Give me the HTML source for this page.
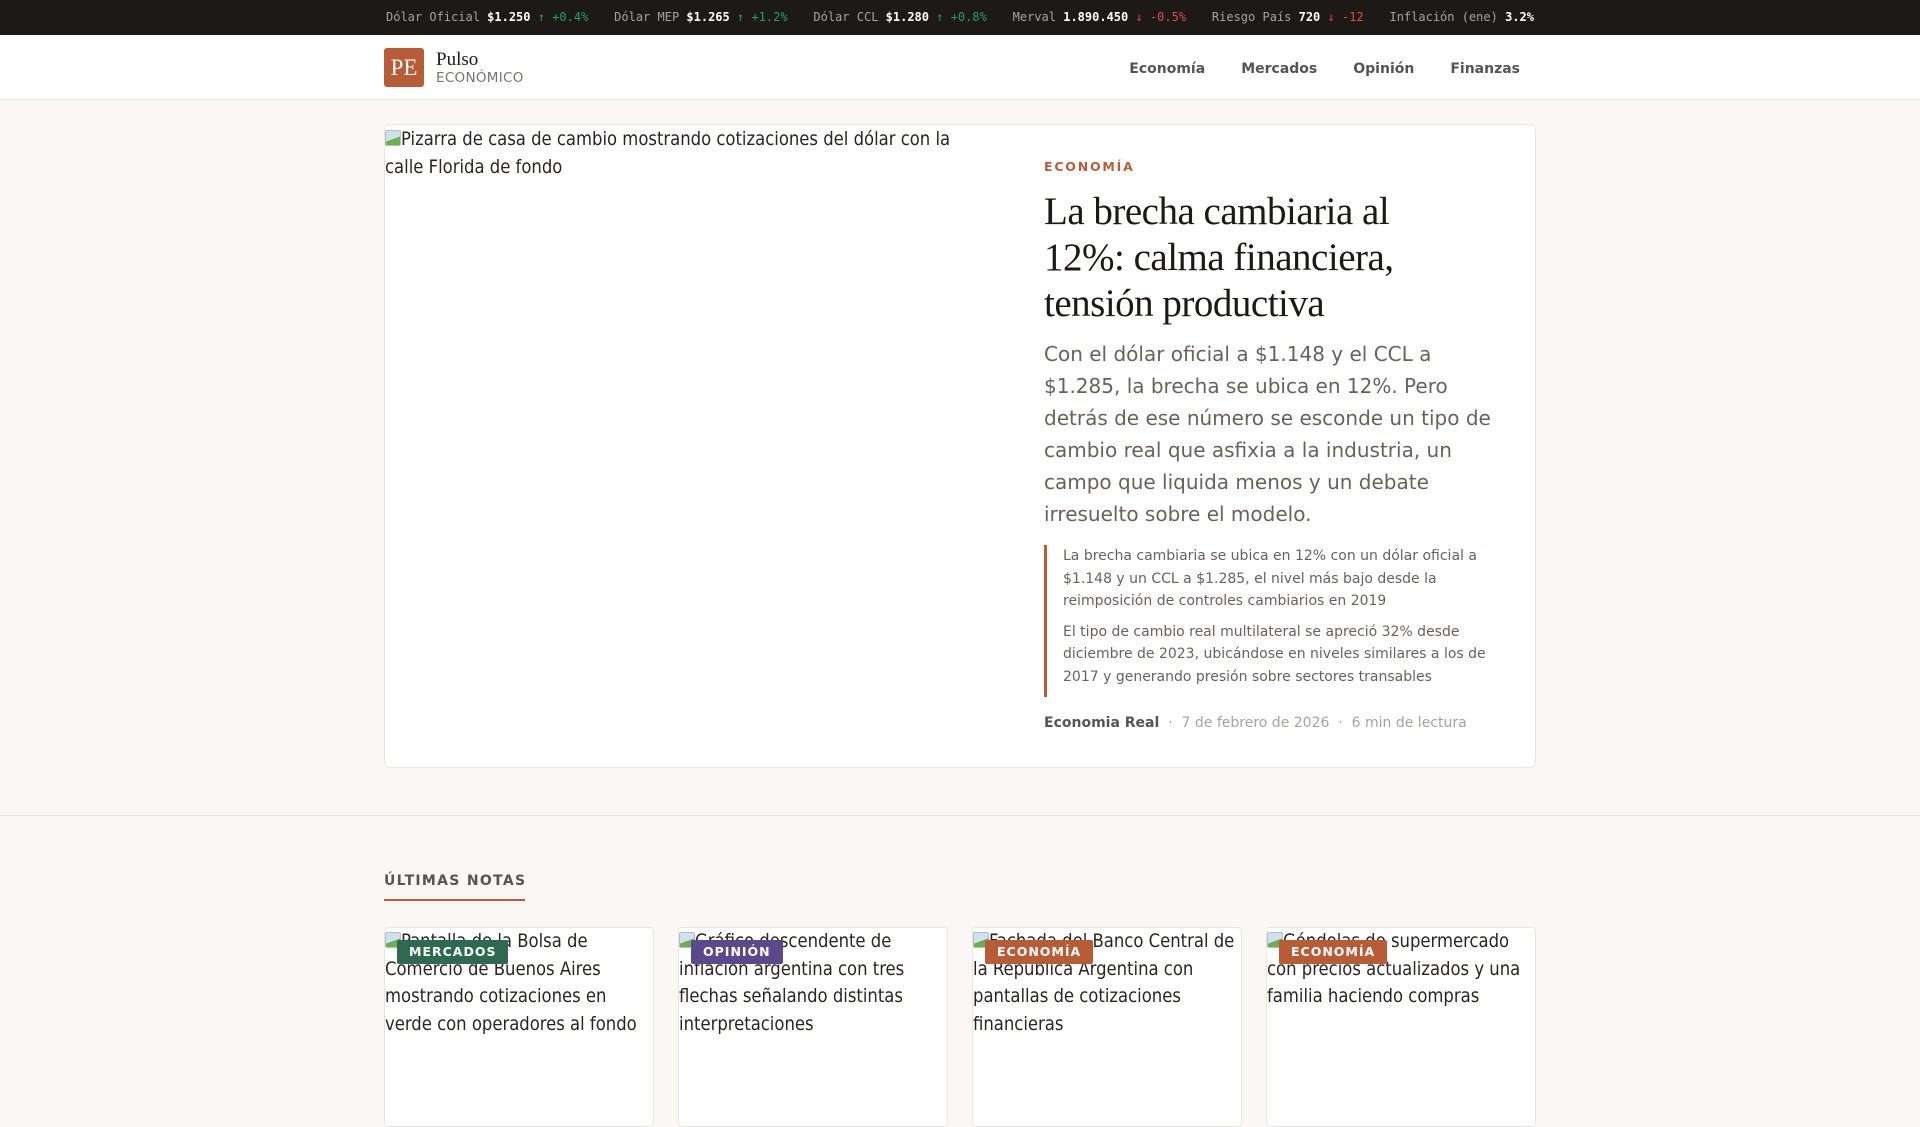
<!DOCTYPE html>
<html><head><meta charset="utf-8"><style>
*{box-sizing:border-box;margin:0;padding:0}
body{width:1920px;height:1080px;overflow:hidden;background:#faf7f4;font-family:"DejaVu Sans","Liberation Sans",sans-serif;color:#2a2420}
.tick{height:35px;background:#1c1917;color:#a8a29e;font-family:"DejaVu Sans Mono","Liberation Mono",monospace;font-size:12px;white-space:nowrap}
.tick .in{width:1152px;margin:0 auto;display:flex;justify-content:space-between;line-height:34px;padding:0 2px}
.tick b{color:#fff}.up{color:#22a05a}.dn{color:#e5484d}
header{height:65px;background:#fff;border-bottom:1px solid #e7e2dc}
header .in{width:1152px;margin:0 auto;position:relative;height:64px}
.logo{position:absolute;left:0;top:13px;width:40px;height:39px;background:#b85c38;border-radius:3px;color:#fff;font-family:"Liberation Serif",serif;font-size:23px;text-align:center;line-height:39px}
.brand{position:absolute;left:52px;top:16px}
.brand .a{font-family:"Liberation Serif",serif;font-size:19px;line-height:18px;color:#1c1917}
.brand .b{font-size:13.5px;color:#78716c;letter-spacing:.3px;margin-top:1px}
nav{position:absolute;right:0;top:0;display:flex;line-height:68px}
nav a{font-size:14px;font-weight:bold;color:#57534e;margin-left:36px;text-decoration:none}
nav a:last-child{margin-right:16px}
.hero{position:absolute;left:384px;top:124px;width:1152px;height:644px;background:#fff;border:1px solid #ebe5df;border-radius:6px;overflow:hidden}
.alt{font-family:"DejaVu Sans Condensed","DejaVu Sans",sans-serif;font-stretch:condensed;font-size:18.3px;line-height:27.5px;color:#2a2420}
.ic{display:inline-block;width:16px;height:16px;border:1px solid #bbb;border-radius:2px;background:linear-gradient(160deg,#cfe0f0 55%,#6ab04c 56%);vertical-align:-1px}
.hero .alt{position:absolute;left:0;top:1px;width:600px}
.hc{position:absolute;left:659px;top:34px;width:460px}
.cat{font-size:12.5px;font-weight:bold;letter-spacing:1.8px;color:#b85c38}
h1{font-family:"Liberation Serif",serif;font-weight:normal;font-size:39px;line-height:46px;color:#1c1917;margin-top:15px;letter-spacing:-.5px;width:405px}
.sub{font-size:20px;line-height:32px;color:#6b605a;margin-top:11px}
.q{border-left:3px solid #b85c38;margin-top:15px;padding:0 0 9px 16px;font-size:14px;line-height:22.5px;color:#6b605a}
.q p+p{margin-top:8px}
.meta{margin-top:18px;font-size:14px;color:#a8a29e}
.meta b{color:#57534e}
.sep{position:absolute;top:815px;left:0;width:1920px;border-top:1px solid #e7e2dc}
.lt{position:absolute;left:384px;top:873px;font-size:14px;font-weight:bold;letter-spacing:1.3px;color:#57534e}
.ul{position:absolute;left:384px;top:899px;width:141px;height:2px;background:#b85c38}
.card{position:absolute;top:927px;width:270px;height:200px;background:#fff;border:1px solid #ebe5df;border-radius:4px;overflow:hidden}
.bd{position:absolute;left:12px;top:12px;height:24px;padding:0 12px;color:#fff;font-size:12.5px;font-weight:bold;letter-spacing:1px;line-height:24px;border-radius:2px}
</style></head><body>
<div class="tick"><div class="in">
<span>Dólar Oficial <b>$1.250</b> <span class="up">↑ +0.4%</span></span>
<span>Dólar MEP <b>$1.265</b> <span class="up">↑ +1.2%</span></span>
<span>Dólar CCL <b>$1.280</b> <span class="up">↑ +0.8%</span></span>
<span>Merval <b>1.890.450</b> <span class="dn">↓ -0.5%</span></span>
<span>Riesgo País <b>720</b> <span class="dn">↓ -12</span></span>
<span>Inflación (ene) <b>3.2%</b></span>
</div></div>
<header><div class="in">
<div class="logo">PE</div>
<div class="brand"><div class="a">Pulso</div><div class="b">ECONÓMICO</div></div>
<nav><a>Economía</a><a>Mercados</a><a>Opinión</a><a>Finanzas</a></nav>
</div></header>
<div class="hero">
<div class="alt"><span class="ic"></span>Pizarra de casa de cambio mostrando cotizaciones del dólar con la calle Florida de fondo</div>
<div class="hc">
<div class="cat">ECONOMÍA</div>
<h1>La brecha cambiaria al 12%: calma financiera, tensión productiva</h1>
<div class="sub">Con el dólar oficial a $1.148 y el CCL a $1.285, la brecha se ubica en 12%. Pero detrás de ese número se esconde un tipo de cambio real que asfixia a la industria, un campo que liquida menos y un debate irresuelto sobre el modelo.</div>
<div class="q"><p>La brecha cambiaria se ubica en 12% con un dólar oficial a $1.148 y un CCL a $1.285, el nivel más bajo desde la reimposición de controles cambiarios en 2019</p><p>El tipo de cambio real multilateral se apreció 32% desde diciembre de 2023, ubicándose en niveles similares a los de 2017 y generando presión sobre sectores transables</p></div>
<div class="meta"><b>Economia Real</b> &nbsp;·&nbsp; 7 de febrero de 2026 &nbsp;·&nbsp; 6 min de lectura</div>
</div></div>
<div class="sep"></div>
<div class="lt">ÚLTIMAS NOTAS</div><div class="ul"></div>
<div class="card" style="left:384px"><div class="alt"><span class="ic"></span>Pantalla de la Bolsa de Comercio de Buenos Aires mostrando cotizaciones en verde con operadores al fondo</div><div class="bd" style="background:#2d6a4f">MERCADOS</div></div>
<div class="card" style="left:678px"><div class="alt"><span class="ic"></span>Gráfico descendente de inflación argentina con tres flechas señalando distintas interpretaciones</div><div class="bd" style="background:#5b4a8b">OPINIÓN</div></div>
<div class="card" style="left:972px"><div class="alt"><span class="ic"></span>Fachada del Banco Central de la República Argentina con pantallas de cotizaciones financieras</div><div class="bd" style="background:#b85c38">ECONOMÍA</div></div>
<div class="card" style="left:1266px"><div class="alt"><span class="ic"></span>Góndolas de supermercado con precios actualizados y una familia haciendo compras</div><div class="bd" style="background:#b85c38">ECONOMÍA</div></div>
</body></html>
